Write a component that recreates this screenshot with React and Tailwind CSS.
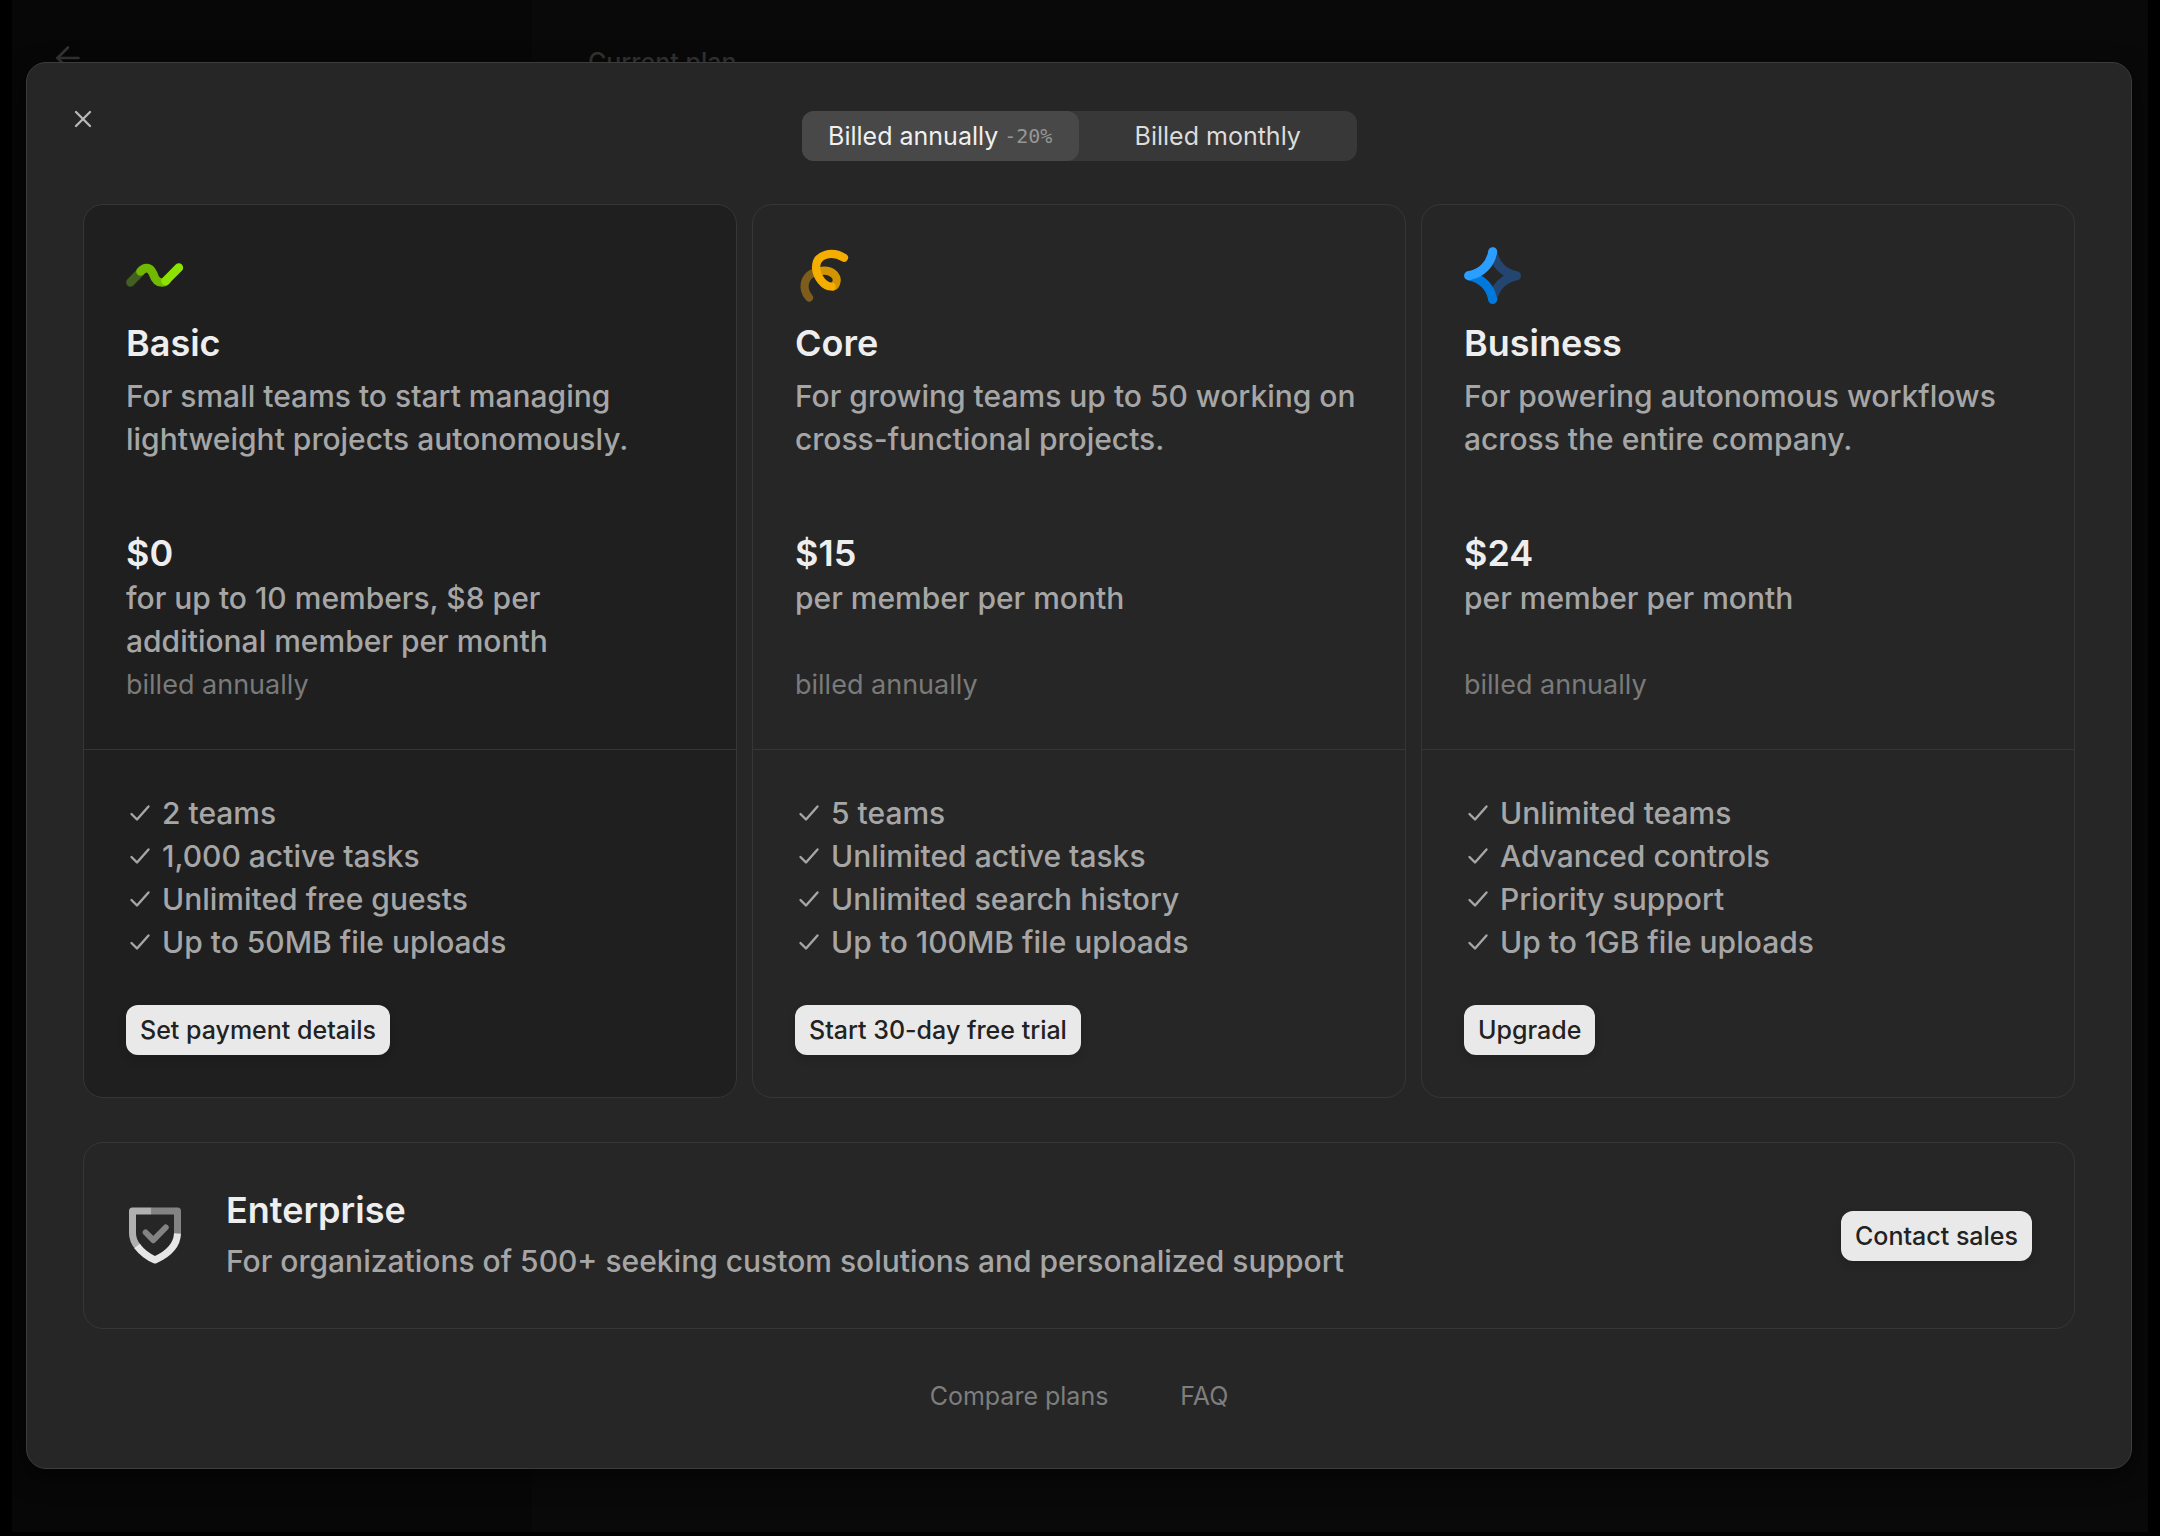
// src/components/billing/PlansModal.jsx
import React, { useState } from 'react';
import { ArrowLeft, X } from 'lucide-react';

const BasicIcon = () => (
  <svg viewBox="0 0 58 58" className="h-[58px] w-[58px]" fill="none" strokeWidth="8.7" strokeLinecap="round" aria-hidden="true">
    <path d="M4.500 35.300 L14.500 25" stroke="#426021" />
    <path d="M14.500 24.500 C18.500 19.800 24 19.500 27 26.500 C29.500 34 32 35.500 36 35.500 C38 35.500 39 35 40.500 33.500" stroke="#70b900" />
    <path d="M39.500 34 L52.800 20.700" stroke="#8ce200" />
  </svg>
);

const CoreIcon = () => (
  <svg viewBox="0 0 58 58" className="h-[58px] w-[58px]" fill="none" strokeWidth="8.2" strokeLinecap="round" aria-hidden="true">
    <path d="M14 50.500 C6.500 41.500 8.500 29.500 20 25" stroke="#7d5c1c" />
    <path d="M24 24.500 C35 21.500 44 28.500 41.300 35.500 C40.800 37.500 39.500 39 38 39.500" stroke="#d29400" />
    <path d="M49 10.700 C37 3.500 21 7 21 20.500 C21.500 30 29 39.500 36.500 39.500" stroke="#f5ae00" />
  </svg>
);

const BusinessIcon = () => (
  <svg viewBox="0 0 58 58" className="h-[58px] w-[58px]" fill="none" strokeWidth="9" strokeLinecap="round" strokeLinejoin="round" aria-hidden="true">
    <path d="M28.700 4.700 C31 17.500 40 26.500 52.500 28.700 C40 31 31 40 28.700 52.500" stroke="#24456f" />
    <path d="M4.700 28.700 C17.500 31 26.500 40 28.700 52.500" stroke="#0078dc" />
    <path d="M28.700 4.700 C26.500 17.500 17.500 26.500 4.700 28.700" stroke="#2b9fff" />
  </svg>
);

const EnterpriseIcon = () => (
  <svg viewBox="0 0 58 58" className="h-[58px] w-[58px] shrink-0" fill="none" strokeWidth="7" strokeLinejoin="round" aria-hidden="true">
    <path d="M25.700 4 H6.500 V26 C6.500 31.500 8.500 36 12 40" stroke="#b0b0b0" />
    <path d="M25.700 4 H51.500 V27" stroke="#838383" />
    <path d="M11 39 C16 45.500 22 50 29 53 C40 48 51 39.500 51.500 26.500" stroke="#e6e6e6" />
    <path d="M19.700 25.500 L27.300 33.200 L39.700 20.500" stroke="#838383" strokeWidth="6" strokeLinecap="round" />
  </svg>
);

const CheckIcon = () => (
  <svg viewBox="0 0 28 28" className="h-7 w-7 shrink-0" fill="none" stroke="currentColor" strokeWidth="2.4" strokeLinecap="round" strokeLinejoin="round" aria-hidden="true">
    <path d="M5.500 14 L11 19.500 L22.500 6.500" />
  </svg>
);

const plans = [
  {
    name: 'Basic',
    icon: BasicIcon,
    description: 'For small teams to start managing lightweight projects autonomously.',
    price: '$0',
    unit: 'for up to 10 members, $8 per additional member per month',
    features: ['2 teams', '1,000 active tasks', 'Unlimited free guests', 'Up to 50MB file uploads'],
    action: 'Set payment details',
    current: true,
  },
  {
    name: 'Core',
    icon: CoreIcon,
    description: 'For growing teams up to 50 working on cross-functional projects.',
    price: '$15',
    unit: 'per member per month',
    features: ['5 teams', 'Unlimited active tasks', 'Unlimited search history', 'Up to 100MB file uploads'],
    action: 'Start 30-day free trial',
  },
  {
    name: 'Business',
    icon: BusinessIcon,
    description: 'For powering autonomous workflows across the entire company.',
    price: '$24',
    unit: 'per member per month',
    features: ['Unlimited teams', 'Advanced controls', 'Priority support', 'Up to 1GB file uploads'],
    action: 'Upgrade',
  },
];

const ActionButton = ({ children }) => (
  <button
    type="button"
    className="h-[50px] shrink-0 rounded-xl bg-[#e9e9e9] px-3.5 text-[25px] leading-8 font-medium text-[#222222] shadow-[0_4px_8px_rgba(0,0,0,0.15)]"
  >
    {children}
  </button>
);

const PlanCard = ({ plan }) => {
  const Icon = plan.icon;

  return (
    <section className={`flex flex-col rounded-[20px] border border-[#363636] ${plan.current ? 'bg-[#1f1f1f]' : ''}`}>
      <div className="grow border-b border-[#363636] px-[42px] pt-[42px] pb-[43px]">
        <Icon />
        <h2 className="mt-4 text-4xl leading-[44px] font-semibold text-[#eeeeee]">{plan.name}</h2>
        <p className="mt-2.5 min-h-[86px] max-w-[580px]">{plan.description}</p>
        <p className="mt-[70px] text-4xl leading-[44px] font-semibold text-[#eeeeee]">{plan.price}</p>
        <p className="mt-0.5 min-h-[86px] max-w-[480px]">{plan.unit}</p>
        <p className="text-[27px] font-normal text-[#7a7a7a]">billed annually</p>
      </div>
      <div className="px-[42px] py-[42px]">
        <ul>
          {plan.features.map((feature) => (
            <li key={feature} className="flex items-center gap-2">
              <CheckIcon />
              {feature}
            </li>
          ))}
        </ul>
        <div className="mt-[41px] flex">
          <ActionButton>{plan.action}</ActionButton>
        </div>
      </div>
    </section>
  );
};

const BillingToggle = () => {
  const [period, setPeriod] = useState('annually');
  const base = 'flex h-[50px] items-center justify-center rounded-xl text-[25px] leading-8 font-normal';

  return (
    <div className="mx-auto grid w-[555px] max-w-full grid-cols-2 rounded-xl bg-[#383838]" role="group" aria-label="Billing period">
      <button
        type="button"
        aria-pressed={period === 'annually'}
        onClick={() => setPeriod('annually')}
        className={`${base} gap-1.5 ${period === 'annually' ? 'bg-[#484848] text-[#f0f0f0]' : 'text-[#dcdcdc]'}`}
      >
        Billed annually
        <span className="font-['DejaVu_Sans_Mono',monospace] text-[20px] text-[#969696]">-20%</span>
      </button>
      <button
        type="button"
        aria-pressed={period === 'monthly'}
        onClick={() => setPeriod('monthly')}
        className={`${base} ${period === 'monthly' ? 'bg-[#484848] text-[#f0f0f0]' : 'text-[#dcdcdc]'}`}
      >
        Billed monthly
      </button>
    </div>
  );
};

const BillingPage = () => (
  <div className="absolute inset-0 bg-black pr-3 pb-1 pl-3" aria-hidden="true">
    <div className="flex h-full bg-[#090909] text-[#343434]">
      <div className="w-[520px] bg-[#070707] px-[38px] pt-10">
        <ArrowLeft className="h-9 w-9" strokeWidth={1.75} />
      </div>
      <div className="px-14 pt-[46px] text-[25px] leading-8 font-medium">Current plan</div>
    </div>
  </div>
);

const App = () => {
  return (
    <div className="relative min-h-screen bg-black font-['Inter',sans-serif]">
      <BillingPage />
      <main className="relative pt-[62px] pr-7 pb-[66px] pl-[26px]">
        <div
          role="dialog"
          aria-label="Choose a plan"
          className="relative rounded-[20px] border border-[#3c3c3c] bg-[#262626] px-14 pt-12 pb-14 text-[30px] leading-[43px] font-medium text-[#a6a6a6] shadow-[0_8px_24px_rgba(0,0,0,0.6)]"
        >
          <button type="button" aria-label="Close" className="absolute top-[38px] left-[38px] p-1 text-[#b8b8b8]">
            <X className="h-7 w-7" strokeWidth={2} />
          </button>
          <BillingToggle />
          <div className="mt-[43px] grid grid-cols-3 gap-[15px]">
            {plans.map((plan) => (
              <PlanCard key={plan.name} plan={plan} />
            ))}
          </div>
          <section className="mt-11 flex items-center rounded-[20px] border border-[#363636] px-[42px] py-[45px]">
            <EnterpriseIcon />
            <div className="ml-[42px] grow">
              <h2 className="text-4xl leading-[44px] font-semibold text-[#eeeeee]">Enterprise</h2>
              <p className="mt-2">For organizations of 500+ seeking custom solutions and personalized support</p>
            </div>
            <ActionButton>Contact sales</ActionButton>
          </section>
          <nav className="mt-[51px] flex justify-center gap-[72px] text-[25px] leading-8 font-normal text-[#7e7e7e]">
            <a href="#compare">Compare plans</a>
            <a href="#faq">FAQ</a>
          </nav>
        </div>
      </main>
    </div>
  );
};

export default App;
